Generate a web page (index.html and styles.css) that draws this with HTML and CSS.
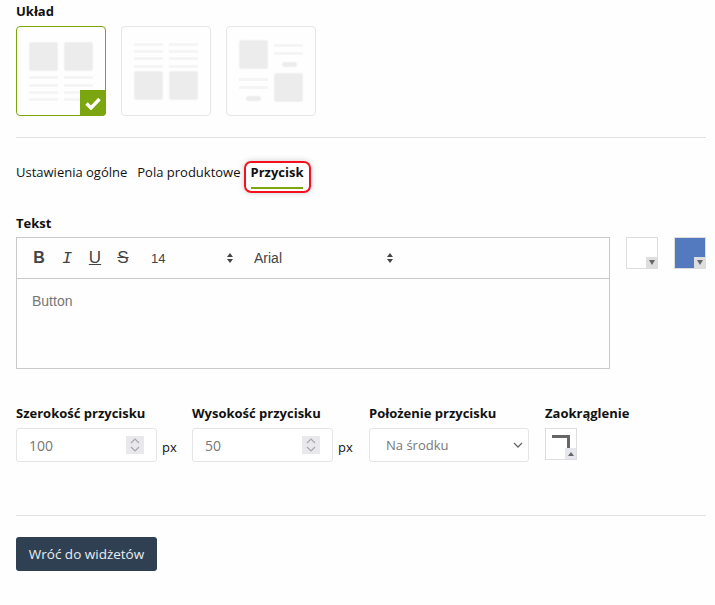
FILE: index.html
```html
<!DOCTYPE html>
<html lang="pl">
<head>
    <meta charset="UTF-8">
    <meta name="viewport" content="width=device-width, initial-scale=1.0">
    <title>Przycisk</title>
    <link rel="stylesheet" href="styles.css">
</head>
<body>
    <div class="field-label layout-label">Układ</div>
    <div class="layouts">
        <div class="layout-card selected">
            <svg class="thumb" width="88" height="88" viewBox="0 0 88 88">
                <rect class="block" x="12" y="15" width="29" height="29" rx="2"/>
                <rect class="block" x="47" y="15" width="29" height="29" rx="2"/>
                <rect class="line" x="12" y="49" width="29" height="3"/>
                <rect class="line" x="47" y="49" width="29" height="3"/>
                <rect class="line" x="12" y="57" width="29" height="3"/>
                <rect class="line" x="47" y="57" width="29" height="3"/>
                <rect class="line" x="12" y="64" width="29" height="3"/>
                <rect class="line" x="47" y="64" width="29" height="3"/>
                <rect class="line" x="12" y="71" width="29" height="3"/>
                <rect class="line" x="47" y="71" width="29" height="3"/>
            </svg>
            <div class="check">
                <svg width="16" height="13" viewBox="0 0 16 13"><path d="M1.5 6.5l4.5 4.5 8.5-9" fill="none" stroke="#fff" stroke-width="3.4"/></svg>
            </div>
        </div>
        <div class="layout-card">
            <svg class="thumb" width="88" height="88" viewBox="0 0 88 88">
                <rect class="line" x="12" y="16" width="29" height="3"/>
                <rect class="line" x="47" y="16" width="29" height="3"/>
                <rect class="line" x="12" y="23" width="29" height="3"/>
                <rect class="line" x="47" y="23" width="29" height="3"/>
                <rect class="line" x="12" y="30" width="29" height="3"/>
                <rect class="line" x="47" y="30" width="29" height="3"/>
                <rect class="line" x="12" y="38" width="29" height="3"/>
                <rect class="line" x="47" y="38" width="29" height="3"/>
                <rect class="block" x="12" y="44" width="29" height="29" rx="2"/>
                <rect class="block" x="47" y="44" width="29" height="29" rx="2"/>
            </svg>
        </div>
        <div class="layout-card">
            <svg class="thumb" width="88" height="88" viewBox="0 0 88 88">
                <rect class="block" x="12" y="13" width="29" height="29" rx="2"/>
                <rect class="line" x="47" y="17" width="29" height="3"/>
                <rect class="line" x="47" y="25" width="29" height="3"/>
                <rect class="pill" x="55" y="35" width="15" height="5" rx="2.5"/>
                <rect class="line" x="12" y="51" width="29" height="3"/>
                <rect class="line" x="12" y="59" width="29" height="3"/>
                <rect class="pill" x="19" y="69" width="15" height="5" rx="2.5"/>
                <rect class="block" x="47" y="46" width="29" height="29" rx="2"/>
            </svg>
        </div>
    </div>

    <hr class="divider tabs-divider">

    <div class="tabs">
        <div class="tab">Ustawienia ogólne</div>
        <div class="tab">Pola produktowe</div>
        <div class="tab active">Przycisk</div>
    </div>

    <div class="field-label text-label">Tekst</div>
    <div class="editor-row">
        <div class="editor">
            <div class="toolbar">
                <span class="tool tool-b">B</span>
                <span class="tool tool-i">I</span>
                <span class="tool tool-u">U</span>
                <span class="tool tool-s">S</span>
                <span class="tool-select size-select">14
                    <svg class="updown" width="6" height="10" viewBox="0 0 6 10"><path d="M3 0l3 4H0zM3 10L0 6h6z" fill="#444"/></svg>
                </span>
                <span class="tool-select font-select">Arial
                    <svg class="updown" width="6" height="10" viewBox="0 0 6 10"><path d="M3 0l3 4H0zM3 10L0 6h6z" fill="#444"/></svg>
                </span>
            </div>
            <div class="editor-body">Button</div>
        </div>
        <div class="swatch swatch-white"><span class="corner"><i class="arrow-down"></i></span></div>
        <div class="swatch swatch-blue"><span class="corner"><i class="arrow-down"></i></span></div>
    </div>

    <div class="settings">
        <div class="setting setting-size">
            <div class="field-label">Szerokość przycisku</div>
            <div class="with-unit">
                <div class="number-input">
                    <input type="text" value="100">
                    <span class="spinner">
                        <svg width="18" height="18" viewBox="0 0 18 18"><path d="M5 7l4-4 4 4M5 11l4 4 4-4" fill="none" stroke="#a6a6ac" stroke-width="1.2"/></svg>
                    </span>
                </div>
                <span class="unit">px</span>
            </div>
        </div>
        <div class="setting setting-size">
            <div class="field-label">Wysokość przycisku</div>
            <div class="with-unit">
                <div class="number-input">
                    <input type="text" value="50">
                    <span class="spinner">
                        <svg width="18" height="18" viewBox="0 0 18 18"><path d="M5 7l4-4 4 4M5 11l4 4 4-4" fill="none" stroke="#a6a6ac" stroke-width="1.2"/></svg>
                    </span>
                </div>
                <span class="unit">px</span>
            </div>
        </div>
        <div class="setting setting-position">
            <div class="field-label">Położenie przycisku</div>
            <select class="position-select">
                <option>Na środku</option>
            </select>
        </div>
        <div class="setting">
            <div class="field-label">Zaokrąglenie</div>
            <div class="radius-box"><span class="radius-mark"></span><span class="corner"><i class="arrow-up"></i></span></div>
        </div>
    </div>

    <hr class="divider footer-divider">

    <button class="back-button">Wróć do widżetów</button>
</body>
</html>
```

FILE: styles.css
```css
body {
    font-family: "Open Sans", sans-serif;
    font-size: 13px;
    color: #111;
    background-color: #fefefe;
    margin: 0;
    padding: 0 9px 0 16px;
}

.field-label {
    font-weight: 700;
    font-size: 13px;
    line-height: 18px;
    color: #111;
}

.layout-label {
    padding-top: 2px;
}

.layouts {
    display: flex;
    gap: 15px;
    margin-top: 6px;
}

.layout-card {
    position: relative;
    width: 90px;
    height: 90px;
    box-sizing: border-box;
    border: 1px solid #e6e6e6;
    border-radius: 4px;
}

.layout-card.selected {
    border-color: #7ba60f;
}

.thumb {
    display: block;
}

.block {
    fill: #ececec;
    stroke: #f8f8f8;
    stroke-width: 1;
}

.line {
    fill: #f5f5f5;
}

.pill {
    fill: #ececec;
    stroke: #f6f6f6;
    stroke-width: 1;
}

.check {
    position: absolute;
    right: -1px;
    bottom: -1px;
    width: 26px;
    height: 26px;
    background-color: #7ba60f;
    border-radius: 0 0 4px 0;
    display: flex;
    align-items: center;
    justify-content: center;
}

.divider {
    border: none;
    border-top: 1px solid #e2e2e2;
    margin: 0;
}

.tabs-divider {
    margin-top: 21px;
}

.tabs {
    display: flex;
    gap: 10px;
    margin-top: 25px;
}

.tab {
    line-height: 18px;
    padding-bottom: 6px;
    border-bottom: 2px solid transparent;
}

.tab.active {
    position: relative;
    font-weight: 700;
    border-bottom-color: #7ba60f;
}

.tab.active::after {
    content: "";
    position: absolute;
    left: -7px;
    right: -8px;
    top: -2px;
    bottom: -6px;
    border: 2px solid #f4101c;
    border-radius: 7px;
    box-shadow: 0 0 6px rgba(0, 0, 0, 0.2);
}

.text-label {
    margin-top: 25px;
}

.editor-row {
    display: flex;
    align-items: flex-start;
    margin-top: 5px;
}

.editor {
    width: 594px;
    height: 132px;
    box-sizing: border-box;
    border: 1px solid #c9c9c9;
    font-family: "Liberation Sans", Arial, sans-serif;
}

.toolbar {
    display: flex;
    align-items: center;
    height: 40px;
    border-bottom: 1px solid #c9c9c9;
    padding-left: 8px;
    color: #444;
}

.tool {
    width: 28px;
    text-align: center;
    font-size: 16px;
}

.tool-b {
    font-weight: 700;
}

.tool-i {
    font-family: "Liberation Mono", monospace;
    font-style: italic;
    font-size: 17px;
}

.tool-u {
    font-size: 17px;
    text-decoration: underline;
}

.tool-s {
    font-size: 17px;
    text-decoration: line-through;
}

.tool-select {
    display: flex;
    align-items: center;
    justify-content: space-between;
    font-size: 13px;
}

.size-select {
    width: 82px;
    margin-left: 14px;
}

.font-select {
    width: 139px;
    margin-left: 21px;
    font-size: 14px;
}

.editor-body {
    padding: 14px 15px;
    font-size: 14px;
    line-height: 16px;
    color: #777;
}

.swatch {
    position: relative;
    width: 32px;
    height: 32px;
    box-sizing: border-box;
    border: 1px solid #ddd;
}

.swatch-white {
    margin-left: 16px;
    background-color: #fff;
}

.swatch-blue {
    margin-left: 16px;
    background-color: #537abf;
}

.corner {
    position: absolute;
    right: 0;
    bottom: 0;
    width: 11px;
    height: 11px;
    background-color: #dedede;
    display: flex;
    align-items: center;
    justify-content: center;
}

.arrow-down {
    border-left: 3px solid transparent;
    border-right: 3px solid transparent;
    border-top: 5px solid #666;
}

.arrow-up {
    border-left: 3px solid transparent;
    border-right: 3px solid transparent;
    border-bottom: 4px solid #666;
}

.settings {
    display: flex;
    margin-top: 35px;
}

.setting-size {
    width: 176px;
}

.setting-size + .setting-size {
    width: 177px;
}

.setting-position {
    width: 176px;
}

.setting .field-label {
    margin-bottom: 6px;
}

.with-unit {
    display: flex;
    align-items: center;
}

.number-input {
    display: flex;
    align-items: center;
    width: 141px;
    height: 34px;
    box-sizing: border-box;
    border: 1px solid #e4e4e4;
    border-radius: 3px;
    background-color: #fff;
}

.number-input input {
    flex: 1;
    min-width: 0;
    border: none;
    outline: none;
    background: none;
    padding: 0 0 0 12px;
    font-family: "Open Sans", sans-serif;
    font-size: 14px;
    color: #777;
}

.spinner {
    display: block;
    width: 18px;
    height: 18px;
    margin-right: 12px;
    background-color: #e9e9ed;
}

.spinner svg {
    display: block;
}

.unit {
    margin-left: 5px;
    padding-top: 4px;
}

.position-select {
    display: block;
    width: 160px;
    height: 34px;
    box-sizing: border-box;
    border: 1px solid #e4e4e4;
    border-radius: 3px;
    background: #fff url("data:image/svg+xml,%3Csvg xmlns='http://www.w3.org/2000/svg' width='10' height='6'%3E%3Cpath d='M1 1l4 4 4-4' fill='none' stroke='%23666' stroke-width='1.3'/%3E%3C/svg%3E") no-repeat right 5px center;
    appearance: none;
    padding-left: 16px;
    font-family: "Open Sans", sans-serif;
    font-size: 13px;
    color: #777;
}

.radius-box {
    position: relative;
    width: 32px;
    height: 32px;
    box-sizing: border-box;
    border: 1px solid #ddd;
    background-color: #fff;
}

.radius-mark {
    position: absolute;
    left: 6px;
    top: 6px;
    width: 18px;
    height: 16px;
    box-sizing: border-box;
    border-top: 3px solid #666;
    border-right: 3px solid #666;
}

.radius-box .corner {
    background-color: #e6e6ee;
}

.footer-divider {
    margin-top: 53px;
}

.back-button {
    display: block;
    margin-top: 21px;
    width: 141px;
    height: 34px;
    border: none;
    border-radius: 3px;
    background-color: #2f4052;
    color: #e8eef3;
    font-family: "Open Sans", sans-serif;
    font-size: 13.5px;
    padding: 0;
}
```
